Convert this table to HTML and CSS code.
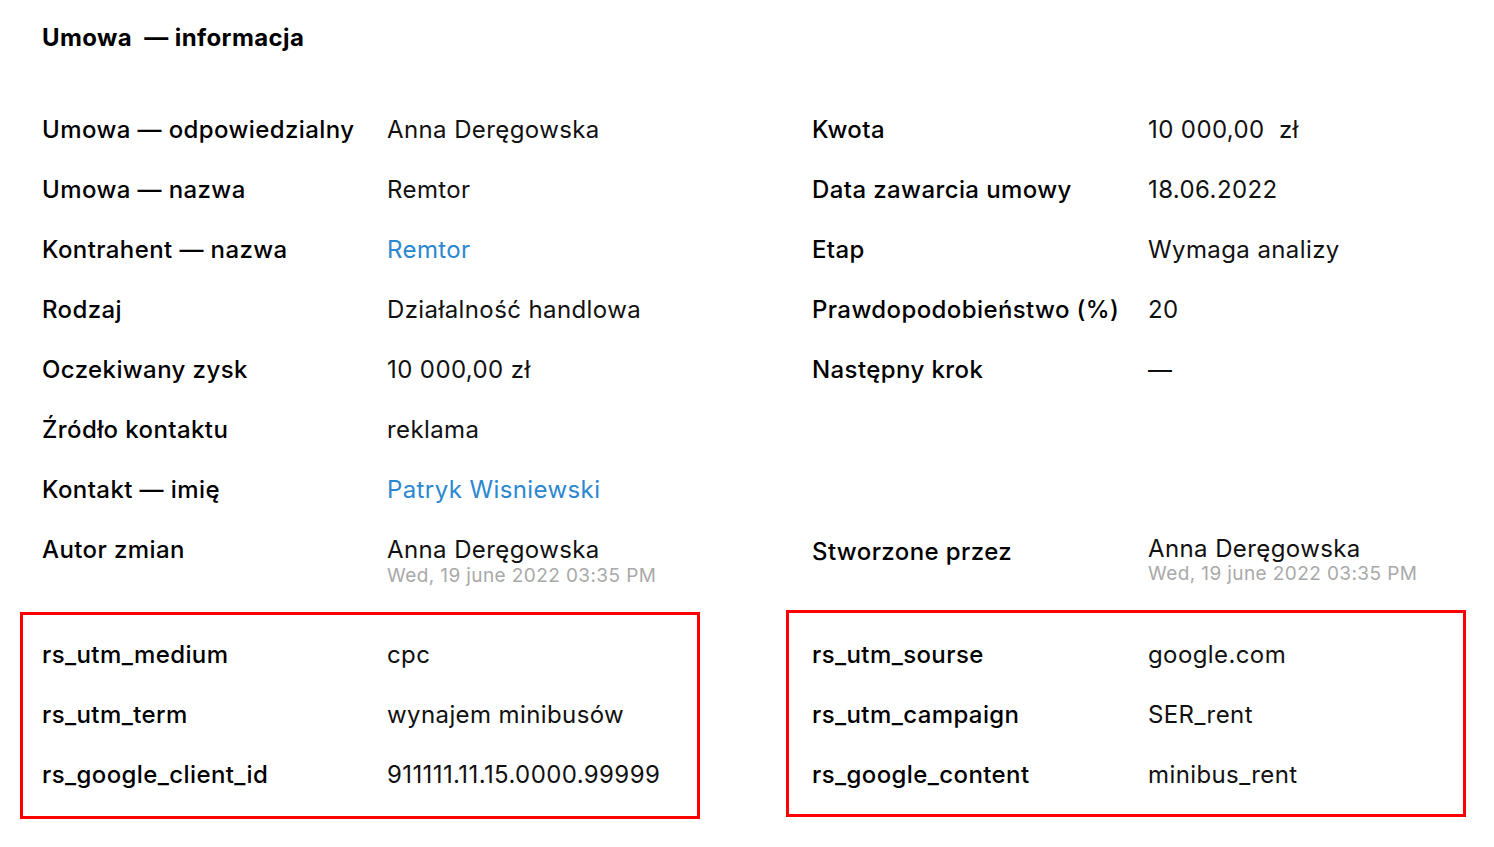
FILE: index.html
```html
<!DOCTYPE html>
<html lang="pl">
<head>
<meta charset="utf-8">
<title>Umowa — informacja</title>
<link rel="stylesheet" href="styles.css">
</head>
<body>
<div class="page">
  <h1 class="title">Umowa&nbsp; — informacja</h1>
  <div class="info-grid">
    <div class="label">Umowa — odpowiedzialny</div>
    <div class="value">Anna Deręgowska</div>
    <div class="label">Kwota</div>
    <div class="value">10 000,00&nbsp; zł</div>

    <div class="label">Umowa — nazwa</div>
    <div class="value">Remtor</div>
    <div class="label">Data zawarcia umowy</div>
    <div class="value">18.06.2022</div>

    <div class="label">Kontrahent — nazwa</div>
    <div class="value link">Remtor</div>
    <div class="label">Etap</div>
    <div class="value">Wymaga analizy</div>

    <div class="label">Rodzaj</div>
    <div class="value">Działalność handlowa</div>
    <div class="label">Prawdopodobieństwo (%)</div>
    <div class="value">20</div>

    <div class="label">Oczekiwany zysk</div>
    <div class="value">10 000,00 zł</div>
    <div class="label">Następny krok</div>
    <div class="value">—</div>

    <div class="label">Źródło kontaktu</div>
    <div class="value">reklama</div>
    <div class="label"></div>
    <div class="value"></div>

    <div class="label">Kontakt — imię</div>
    <div class="value link">Patryk Wisniewski</div>
    <div class="label"></div>
    <div class="value"></div>

    <div class="label multi">Autor zmian</div>
    <div class="value multi">
      <div class="name">Anna Deręgowska</div>
      <div class="date">Wed, 19 june 2022 03:35 PM</div>
    </div>
    <div class="label multi right-created">Stworzone przez</div>
    <div class="value multi right-created-value">
      <div class="name">Anna Deręgowska</div>
      <div class="date">Wed, 19 june 2022 03:35 PM</div>
    </div>
  </div>

  <div class="boxes">
    <div class="utm-box box-left">
      <div class="label">rs_utm_medium</div>
      <div class="value">cpc</div>
      <div class="label">rs_utm_term</div>
      <div class="value">wynajem minibusów</div>
      <div class="label">rs_google_client_id</div>
      <div class="value">911111.11.15.0000.99999</div>
    </div>
    <div class="utm-box box-right">
      <div class="label">rs_utm_sourse</div>
      <div class="value">google.com</div>
      <div class="label">rs_utm_campaign</div>
      <div class="value">SER_rent</div>
      <div class="label">rs_google_content</div>
      <div class="value">minibus_rent</div>
    </div>
  </div>
</div>
</body>
</html>
```

FILE: styles.css
```css
* { box-sizing: border-box; }

html, body {
  margin: 0;
  padding: 0;
  background: #ffffff;
}

body {
  font-family: Inter, "Noto Sans", "Liberation Sans", sans-serif;
  color: #111111;
}

.page {
  padding: 0 20px;
}

.title {
  margin: 24px 0 0 22px;
  font-size: 24px;
  line-height: 28px;
  font-weight: 700;
  letter-spacing: 0.4px;
  color: #000000;
}

.info-grid {
  margin: 48px 0 0 22px;
  display: grid;
  grid-template-columns: 345px 425px 336px 1fr;
}

.label,
.value {
  font-size: 24px;
  letter-spacing: 0.4px;
  line-height: 60px;
  height: 60px;
  white-space: nowrap;
}

.label { color: #000000; font-weight: 500; }
.value { color: #111111; font-weight: 400; }

.link { color: #2b87d0; }

.label.multi,
.value.multi {
  height: auto;
  line-height: 30px;
  padding-top: 15px;
}

.right-created { padding-top: 17px !important; }
.right-created-value { padding-top: 14px !important; }

.name { line-height: 30px; }

.date {
  font-size: 19px;
  letter-spacing: 0.4px;
  line-height: 22px;
  color: #a9a9a9;
}

.right-created-value .date { line-height: 20px; }

.boxes {
  margin-top: 25px;
  display: flex;
  align-items: flex-start;
  gap: 86px;
}

.utm-box {
  width: 680px;
  border: 3px solid #ff0000;
  display: grid;
}

.box-left {
  padding: 10px 0 11px 19px;
  grid-template-columns: 345px 1fr;
}

.box-right {
  margin-top: -2px;
  padding: 12px 0 9px 23px;
  grid-template-columns: 336px 1fr;
}
```
